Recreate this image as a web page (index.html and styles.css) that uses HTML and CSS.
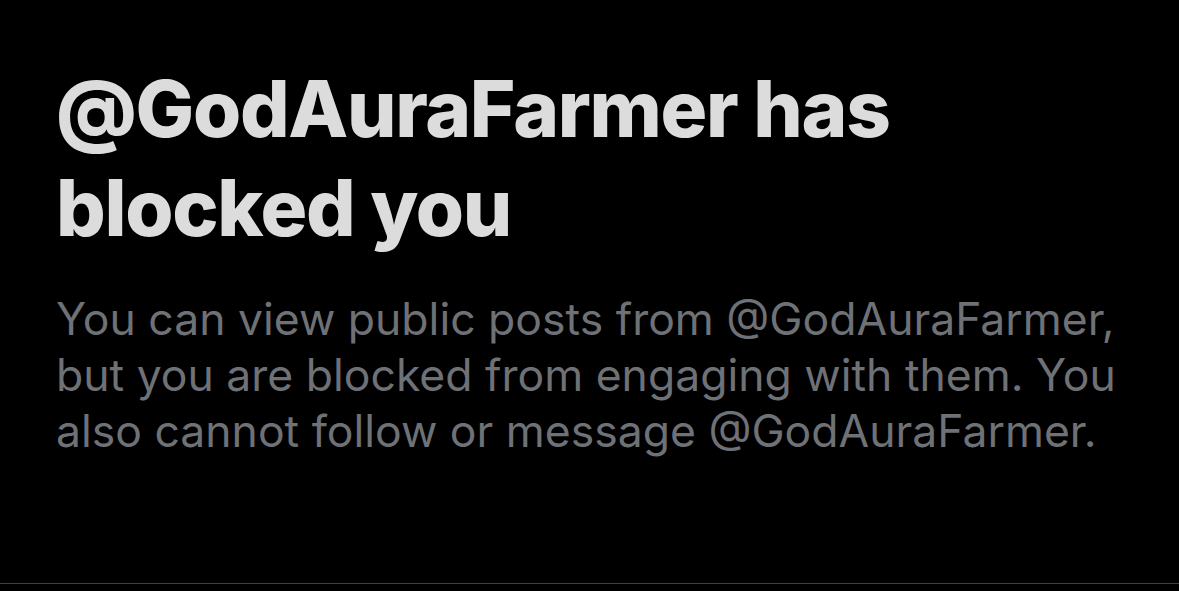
FILE: index.html
```html
<!DOCTYPE html>
<html>
<head>
<meta charset="utf-8">
<link rel="stylesheet" href="styles.css">
</head>
<body>
<div class="page">
  <div class="content">
    <h1 class="title">@GodAuraFarmer has blocked you</h1>
    <p class="desc">You can view public posts from @GodAuraFarmer, but you are blocked from engaging with them. You also cannot follow or message @GodAuraFarmer.</p>
  </div>
  <div class="divider"></div>
</div>
</body>
</html>
```
FILE: styles.css
```css
html, body {
  margin: 0;
  padding: 0;
  background: #000;
}
.page {
  width: 1179px;
  height: 591px;
  display: flex;
  flex-direction: column;
  background: #000;
}
.content {
  flex: 1;
  padding: 59px 40px 0 56px;
}
.title {
  margin: 0;
  font-family: Inter, "Noto Sans", sans-serif;
  font-weight: 800;
  font-size: 78px;
  line-height: 99px;
  letter-spacing: -1.3px;
  color: #dcdcdc;
  width: 900px;
}
.desc {
  margin: 34px 0 0 0;
  font-family: Inter, "Noto Sans", sans-serif;
  font-weight: 400;
  font-size: 44.5px;
  line-height: 56px;
  color: #6e7176;
  width: 1080px;
}
.divider {
  height: 1px;
  background: #3d3f42;
  margin-bottom: 7px;
}
```
